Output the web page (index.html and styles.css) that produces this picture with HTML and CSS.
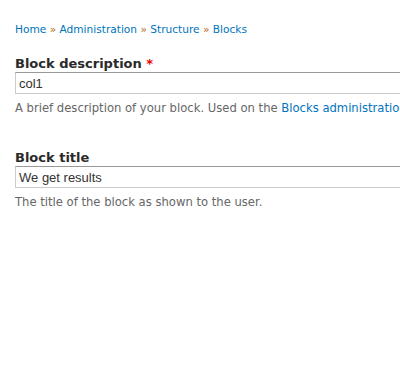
FILE: index.html
```html
<!DOCTYPE html>
<html>
<head>
<meta charset="utf-8">
<link rel="stylesheet" href="styles.css">
</head>
<body>
<div class="page">
  <nav class="breadcrumb"><a href="#">Home</a> » <a href="#">Administration</a> » <a href="#">Structure</a> » <a href="#">Blocks</a></nav>
  <div class="form-item">
    <label class="label">Block description <span class="req">*</span></label>
    <input class="text" type="text" value="col1">
    <div class="description">A brief description of your block. Used on the <a href="#">Blocks administration page</a>.</div>
  </div>
  <div class="form-item second">
    <label class="label">Block title</label>
    <input class="text" type="text" value="We get results">
    <div class="description">The title of the block as shown to the user.</div>
  </div>
</div>
</body>
</html>
```
FILE: styles.css
```css
html, body { margin: 0; padding: 0; background: #fff; }
body { font-family: "DejaVu Sans", sans-serif; color: #333; overflow: hidden; }
.page { padding: 22px 0 0 15px; width: 600px; }
a { color: #0074bd; text-decoration: none; }
.breadcrumb { font-size: 10.6px; line-height: 14px; color: #b06a1c; height: 14px; }
.form-item { margin-top: 20px; }
.form-item.second { margin-top: 34px; }
.label { display: block; font-weight: bold; font-size: 13px; line-height: 16px; color: #2a2a2a; }
.req { color: #e00; }
.text { display: block; box-sizing: border-box; width: 500px; height: 22px; margin: 0; padding: 2px 3px; border: 1px solid #ccc; border-top-color: #999; font-family: "Liberation Sans", Arial, sans-serif; font-size: 13px; color: #333; background: #fff; }
.description { font-size: 11.6px; line-height: 15px; color: #666; margin-top: 7px; white-space: nowrap; }
```
